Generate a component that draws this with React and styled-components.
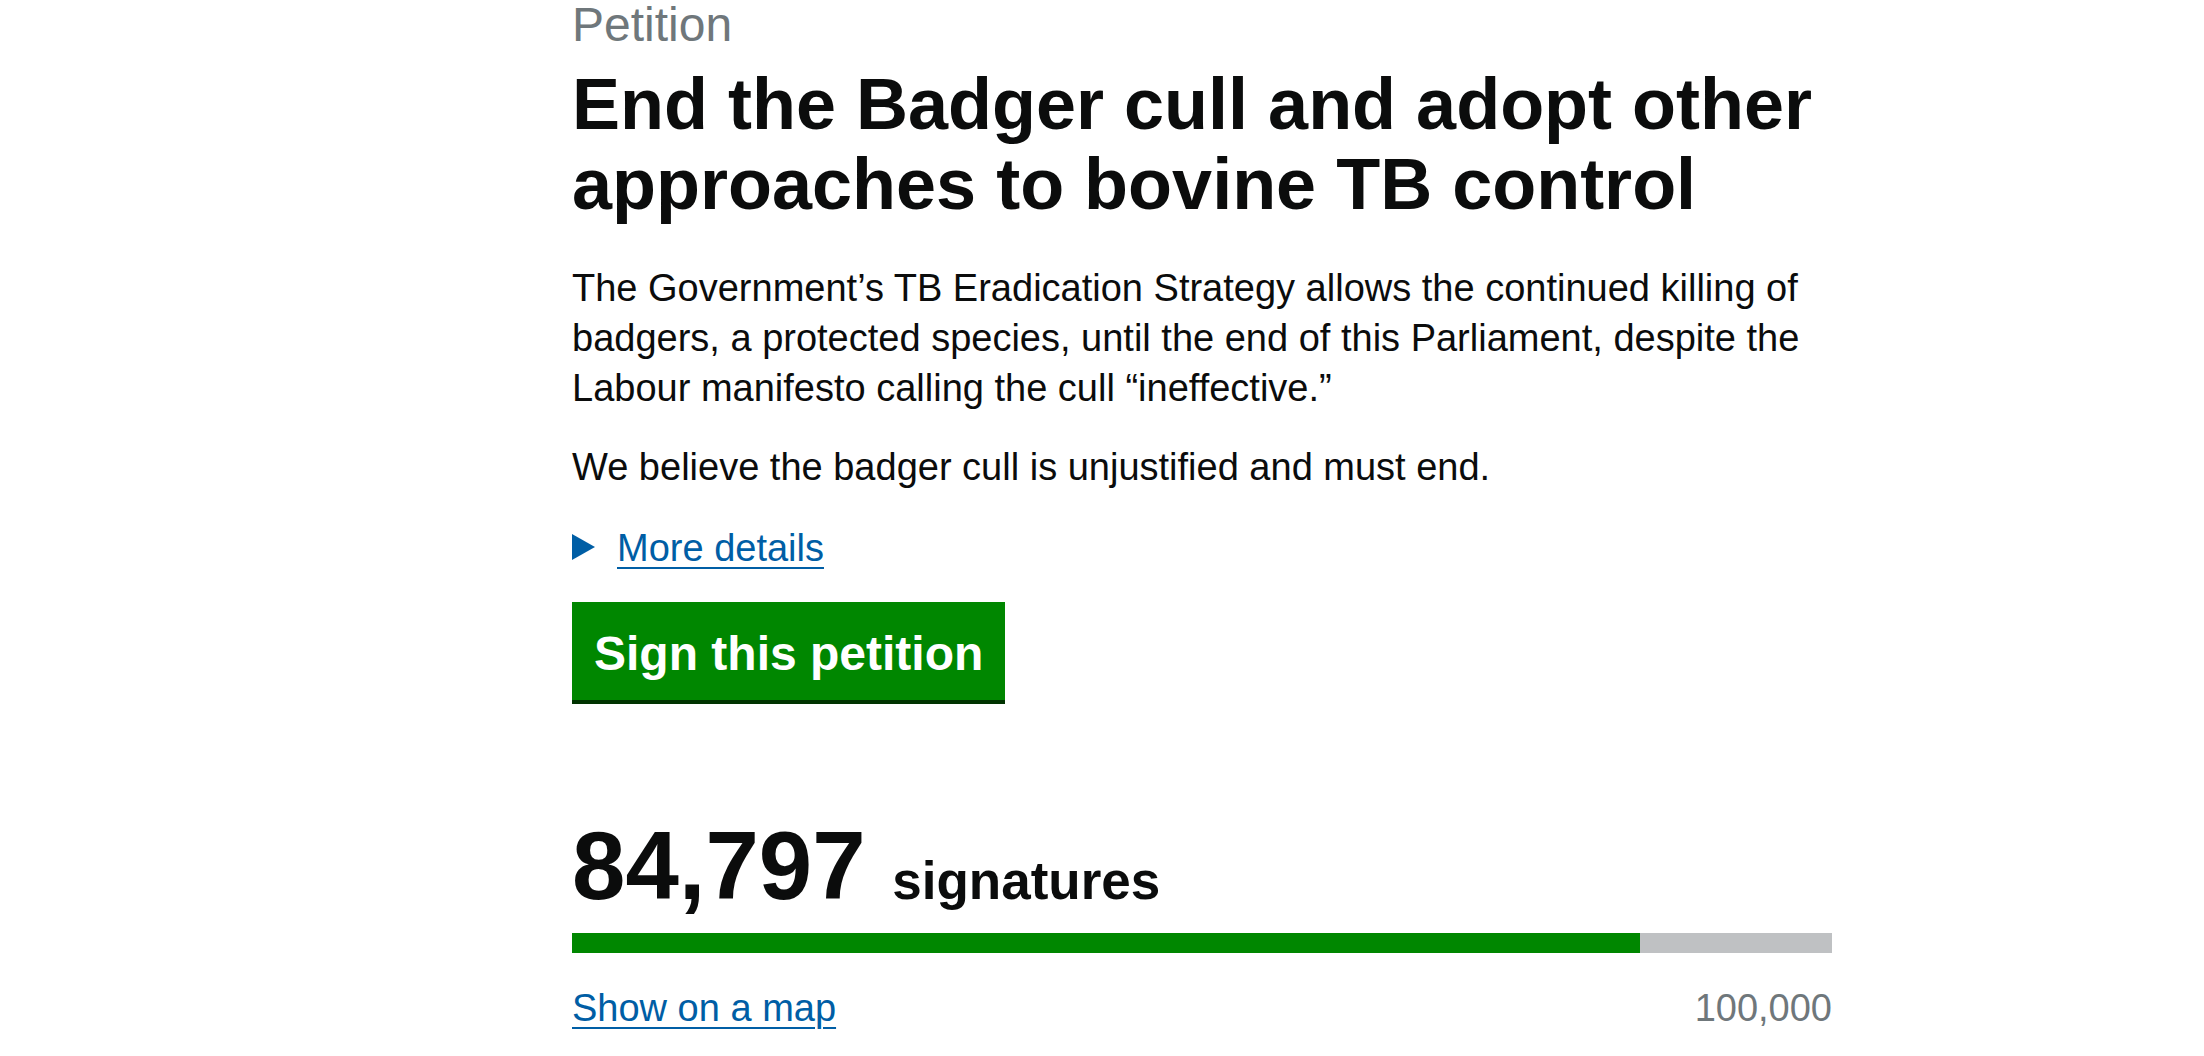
import React from "react";
import styled, { createGlobalStyle } from "styled-components";

const GlobalStyle = createGlobalStyle`
  html, body {
    margin: 0;
    padding: 0;
    background: #ffffff;
  }
  body {
    font-family: "Liberation Sans", Arial, Helvetica, sans-serif;
    color: #0b0c0c;
    -webkit-font-smoothing: antialiased;
  }
`;

const Page = styled.main`
  width: 1260px;
  padding-left: 572px;
  display: flex;
  flex-direction: column;
  align-items: flex-start;
`;

const Caption = styled.span`
  display: block;
  font-size: 48px;
  line-height: 50px;
  color: #6f777b;
  margin: 0 0 14px;
`;

const Title = styled.h1`
  font-size: 72px;
  line-height: 80px;
  font-weight: 700;
  margin: 0 0 39px;
  color: #0b0c0c;
`;

const Description = styled.div`
  display: flex;
  flex-direction: column;
  gap: 29px;
  margin-bottom: 31px;
`;

const Paragraph = styled.p`
  font-size: 38px;
  line-height: 50px;
  margin: 0;
`;

const Summary = styled.div`
  display: flex;
  align-items: center;
  gap: 22px;
  margin-bottom: 29px;
  cursor: pointer;
`;

const Arrow = styled.span`
  display: block;
  width: 0;
  height: 0;
  border-style: solid;
  border-width: 13px 0 13px 23px;
  border-color: transparent transparent transparent #005ea5;
  margin-top: -2px;
`;

const TextLink = styled.a`
  font-size: 38px;
  line-height: 50px;
  color: #005ea5;
  text-decoration: underline;
  text-decoration-thickness: 2px;
  text-underline-offset: 6px;
`;

const Button = styled.button`
  font-family: inherit;
  font-size: 48px;
  font-weight: 700;
  line-height: 58px;
  color: #ffffff;
  background: #008700;
  border: 0;
  border-radius: 0;
  padding: 23px 22px 17px;
  box-shadow: 0 4px 0 #003300;
  margin: 0 0 118px;
  cursor: pointer;
`;

const Count = styled.p`
  margin: 0 0 19px;
  font-size: 96px;
  line-height: 96px;
  font-weight: 700;
`;

const CountLabel = styled.span`
  font-size: 53px;
  line-height: 1;
`;

const Track = styled.div`
  width: 100%;
  height: 20px;
  background: #bfc1c3;
  margin-bottom: 30px;
`;

const Fill = styled.div`
  height: 100%;
  background: #008700;
`;

const Footer = styled.div`
  width: 100%;
  display: flex;
  justify-content: space-between;
  align-items: baseline;
`;

const Target = styled.span`
  font-size: 38px;
  line-height: 50px;
  color: #6f777b;
`;

export default function App() {
  const signatures = 84797;
  const target = 100000;
  const pct = (signatures / target) * 100;

  return (
    <>
      <GlobalStyle />
      <Page>
        <Caption>Petition</Caption>
        <Title>
          End the Badger cull and adopt other approaches to bovine TB control
        </Title>
        <Description>
          <Paragraph>
            The Government’s TB Eradication Strategy allows the continued killing of
            badgers, a protected species, until the end of this Parliament, despite the
            Labour manifesto calling the cull “ineffective.”
          </Paragraph>
          <Paragraph>We believe the badger cull is unjustified and must end.</Paragraph>
        </Description>
        <Summary>
          <Arrow />
          <TextLink href="#">More details</TextLink>
        </Summary>
        <Button type="button">Sign this petition</Button>
        <Count>
          84,797 <CountLabel>signatures</CountLabel>
        </Count>
        <Track>
          <Fill style={{ width: `${pct}%` }} />
        </Track>
        <Footer>
          <TextLink href="#">Show on a map</TextLink>
          <Target>100,000</Target>
        </Footer>
      </Page>
    </>
  );
}
